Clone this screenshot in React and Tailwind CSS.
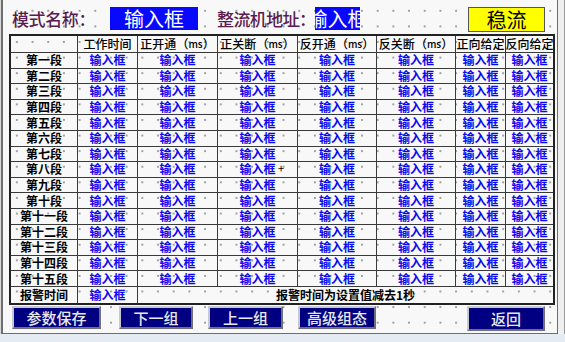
export default function App() {
  const labels = ['第一段','第二段','第三段','第四段','第五段','第六段','第七段','第八段','第九段','第十段','第十一段','第十二段','第十三段','第十四段','第十五段'];
  const cellBase = "flex items-center justify-center border-[#3a3a3a] whitespace-nowrap";
  const dataCls = "text-[12px] font-bold text-[#0a0af0] leading-none";
  const hdr = (t, ms, last) => (
    <div className={`${cellBase} border-b ${last ? '' : 'border-r'} text-[12px] text-black font-medium leading-none`}>
      {t}{ms ? (<><span>（</span><span className="text-[10px]">ms</span><span>）</span></>) : null}
    </div>
  );
  const btn = "h-[23px] bg-[#000080] border-2 border-t-[#c8c8d0] border-l-[#c8c8d0] border-b-[#707078] border-r-[#707078] text-[#e8e8ee] text-[15px] font-medium leading-[19px] flex justify-center whitespace-nowrap";
  return (
    <div className="w-[565px] h-[342px] flex flex-col bg-[#e4ebf2] font-['Noto_Sans_CJK_SC','Noto_Sans',sans-serif] overflow-hidden">
      <div className="flex h-[334px] shrink-0">
        <div className="w-[1px] bg-[#d8d8d8]" />
        <div className="w-[557px] h-full border-l-2 border-r border-b border-[#6e6e6e] bg-[#f8f8f8] bg-[radial-gradient(circle_at_center,#a0a0a0_0.7px,transparent_1.1px)] bg-[length:15.7px_15.6px] bg-[position:6px_3px] flex flex-col">
          {/* top bar */}
          <div className="h-[34px] shrink-0 flex items-start pt-[7px]">
            <div className="ml-[9px] w-[98px] shrink-0 h-[23px] leading-[23px] text-[17px] tracking-[-0.4px] text-[#5a1c50] font-medium whitespace-nowrap">模式名称：</div>
            <div className="w-[88px] shrink-0 h-[23px] bg-[#0808ff] text-white text-[20px] leading-[23px] flex justify-center whitespace-nowrap">输入框</div>
            <div className="ml-[19px] w-[98px] shrink-0 h-[23px] leading-[23px] text-[17px] tracking-[-0.6px] text-[#5a1c50] font-medium whitespace-nowrap overflow-hidden">整流机地址：</div>
            <div className="w-[45px] shrink-0 h-[23px] bg-[#0808ff] overflow-hidden">
              <div className="w-[61px] -ml-[8px] text-center text-white text-[20px] leading-[23px] whitespace-nowrap">输入框</div>
            </div>
            <div className="ml-[108px] w-[77px] shrink-0 h-[25px] bg-[#ffff00] border border-[#555] text-black text-[20px] leading-[23px] flex justify-center whitespace-nowrap">稳流</div>
          </div>
          {/* table */}
          <div className="ml-[6px] w-[546px] border-2 border-[#222] grid grid-cols-[67px_60px_80px_80px_79px_79px_50px_47px] grid-rows-[17px_repeat(16,15.6px)]">
            <div className={`${cellBase} border-b border-r`} />
            {hdr('工作时间')}
            {hdr('正开通', true)}
            {hdr('正关断', true)}
            {hdr('反开通', true)}
            {hdr('反关断', true)}
            {hdr('正向给定')}
            {hdr('反向给定', false, true)}
            {labels.map((l, i) => (
              <div key={l} className="contents">
                <div className={`${cellBase} border-b border-r text-[12px] font-bold text-black leading-none`}>{l}</div>
                {[0,1,2,3,4,5,6].map((c) => (
                  <div key={c} className={`${cellBase} border-b ${c === 6 ? '' : 'border-r'} relative`}>
                    <span className={dataCls}>输入框</span>
                    {i === 7 && c === 2 ? <span className="absolute left-[60px] top-[1px] text-[11px] leading-none text-black">+</span> : null}
                  </div>
                ))}
              </div>
            ))}
            <div className={`${cellBase} border-r text-[12px] font-bold text-black leading-none`}>报警时间</div>
            <div className={`${cellBase} border-r`}><span className={dataCls}>输入框</span></div>
            <div className={`${cellBase} col-span-6 text-[12px] font-bold text-black leading-none`}>报警时间为设置值减去1秒</div>
          </div>
          {/* buttons */}
          <div className="flex items-start pl-[9px] mt-[1px]">
            <div className={`w-[89px] ${btn}`}>参数保存</div>
            <div className={`ml-[18px] w-[74px] ${btn}`}>下一组</div>
            <div className={`ml-[15px] w-[75px] ${btn}`}>上一组</div>
            <div className={`ml-[15px] w-[78px] ${btn}`}>高级组态</div>
            <div className={`ml-[91px] w-[78px] ${btn} h-[25px] leading-[21px]`}>返回</div>
          </div>
        </div>
        <div className="flex-1 bg-[#efefef] border-r border-[#9a9a9a]" />
      </div>
      <div className="flex-1 bg-[#e4ebf2]" />
    </div>
  );
}
